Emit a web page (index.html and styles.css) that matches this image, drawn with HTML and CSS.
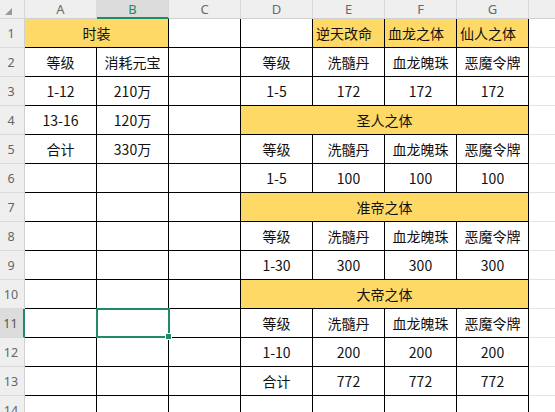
FILE: index.html
```html
<!DOCTYPE html>
<html lang="zh">
<head>
<meta charset="utf-8">
<title>Sheet</title>
<link rel="stylesheet" href="styles.css">
</head>
<body>
<div class="sheet">
  <div class="corner"><svg class="tri" width="7" height="7" viewBox="0 0 7 7"><polygon points="7,0 7,7 0,7" fill="#9a9a9a"/></svg></div>
  <div class="ch">A</div><div class="ch sel">B</div><div class="ch">C</div><div class="ch">D</div><div class="ch">E</div><div class="ch">F</div><div class="ch">G</div><div class="ch last"></div>

  <div class="rh">1</div>
  <div class="c y span2">时装</div><div class="c"></div><div class="c"></div>
  <div class="c y left">逆天改命</div><div class="c y left">血龙之体</div><div class="c y left">仙人之体</div><div class="g"></div>

  <div class="rh">2</div>
  <div class="c">等级</div><div class="c">消耗元宝</div><div class="c"></div>
  <div class="c">等级</div><div class="c">洗髓丹</div><div class="c">血龙魄珠</div><div class="c">恶魔令牌</div><div class="g"></div>

  <div class="rh">3</div>
  <div class="c">1-12</div><div class="c">210万</div><div class="c"></div>
  <div class="c">1-5</div><div class="c">172</div><div class="c">172</div><div class="c">172</div><div class="g"></div>

  <div class="rh">4</div>
  <div class="c">13-16</div><div class="c">120万</div><div class="c"></div>
  <div class="c y span4">圣人之体</div><div class="g"></div>

  <div class="rh">5</div>
  <div class="c">合计</div><div class="c">330万</div><div class="c"></div>
  <div class="c">等级</div><div class="c">洗髓丹</div><div class="c">血龙魄珠</div><div class="c">恶魔令牌</div><div class="g"></div>

  <div class="rh">6</div>
  <div class="c"></div><div class="c"></div><div class="c"></div>
  <div class="c">1-5</div><div class="c">100</div><div class="c">100</div><div class="c">100</div><div class="g"></div>

  <div class="rh">7</div>
  <div class="c"></div><div class="c"></div><div class="c"></div>
  <div class="c y span4">准帝之体</div><div class="g"></div>

  <div class="rh">8</div>
  <div class="c"></div><div class="c"></div><div class="c"></div>
  <div class="c">等级</div><div class="c">洗髓丹</div><div class="c">血龙魄珠</div><div class="c">恶魔令牌</div><div class="g"></div>

  <div class="rh">9</div>
  <div class="c"></div><div class="c"></div><div class="c"></div>
  <div class="c">1-30</div><div class="c">300</div><div class="c">300</div><div class="c">300</div><div class="g"></div>

  <div class="rh">10</div>
  <div class="c"></div><div class="c"></div><div class="c"></div>
  <div class="c y span4">大帝之体</div><div class="g"></div>

  <div class="rh rsel">11</div>
  <div class="c"></div><div class="c active"></div><div class="c"></div>
  <div class="c">等级</div><div class="c">洗髓丹</div><div class="c">血龙魄珠</div><div class="c">恶魔令牌</div><div class="g"></div>

  <div class="rh">12</div>
  <div class="c"></div><div class="c"></div><div class="c"></div>
  <div class="c">1-10</div><div class="c">200</div><div class="c">200</div><div class="c">200</div><div class="g"></div>

  <div class="rh">13</div>
  <div class="c"></div><div class="c"></div><div class="c"></div>
  <div class="c">合计</div><div class="c">772</div><div class="c">772</div><div class="c">772</div><div class="g"></div>

  <div class="rh">14</div>
  <div class="c"></div><div class="c"></div><div class="c"></div>
  <div class="c"></div><div class="c"></div><div class="c"></div><div class="c"></div><div class="g"></div>
</div>
</body>
</html>
```

FILE: styles.css
```css
html, body {
  margin: 0;
  padding: 0;
  overflow: hidden;
  background: #ffffff;
}

.sheet {
  display: grid;
  grid-template-columns: 25px repeat(8, 72px);
  grid-template-rows: 19px repeat(14, 29px);
  width: 601px;
  font-family: "Noto Sans CJK SC", "Noto Sans", sans-serif;
  font-size: 14px;
  color: #111111;
}

.corner {
  background: #efefef;
  border-right: 1px solid #d6d6d6;
  border-bottom: 1px solid #d6d6d6;
  box-sizing: border-box;
  display: flex;
  align-items: flex-start;
  justify-content: flex-end;
  padding: 8px 12px 0 0;
}

.tri {
  display: block;
}

.ch {
  background: #efefef;
  border-right: 1px solid #dadada;
  border-bottom: 1px solid #d0d0d0;
  box-sizing: border-box;
  display: flex;
  align-items: center;
  justify-content: center;
  font-family: "Noto Sans", "Liberation Sans", sans-serif;
  font-size: 13px;
  color: #6a6a6a;
}

.ch.sel {
  background: #dcdcdc;
  color: #1f8a65;
  border-bottom: 2px solid #1f8a65;
}

.rh {
  background: #efefef;
  border-right: 1px solid #d0d0d0;
  border-bottom: 1px solid #dadada;
  box-sizing: border-box;
  display: flex;
  align-items: center;
  justify-content: center;
  font-family: "Noto Sans", "Liberation Sans", sans-serif;
  font-size: 12.5px;
  color: #666666;
  padding-right: 2px;
}

.rh.rsel {
  background: #dcdcdc;
  color: #555555;
  border-right: 2px solid #1f8a65;
}

.c {
  border-right: 1px solid #000000;
  border-bottom: 1px solid #000000;
  box-sizing: border-box;
  display: flex;
  align-items: center;
  justify-content: center;
  white-space: nowrap;
  overflow: visible;
  padding-bottom: 1px;
}

.c.y {
  background: #ffd966;
}

.c.left {
  justify-content: flex-start;
  padding-left: 3px;
}

.span2 {
  grid-column: span 2;
}

.span4 {
  grid-column: span 4;
}

.g {
  border-right: 1px solid #e3e3e3;
  border-bottom: 1px solid #e3e3e3;
  box-sizing: border-box;
}

.active {
  position: relative;
}

.active::before {
  content: "";
  position: absolute;
  left: -1px;
  top: -1px;
  right: -2px;
  bottom: -1px;
  border: 2px solid #1f8a65;
}

.active::after {
  content: "";
  position: absolute;
  right: -4px;
  bottom: -3px;
  width: 5px;
  height: 5px;
  background: #1f8a65;
  border: 1px solid #ffffff;
}
```
